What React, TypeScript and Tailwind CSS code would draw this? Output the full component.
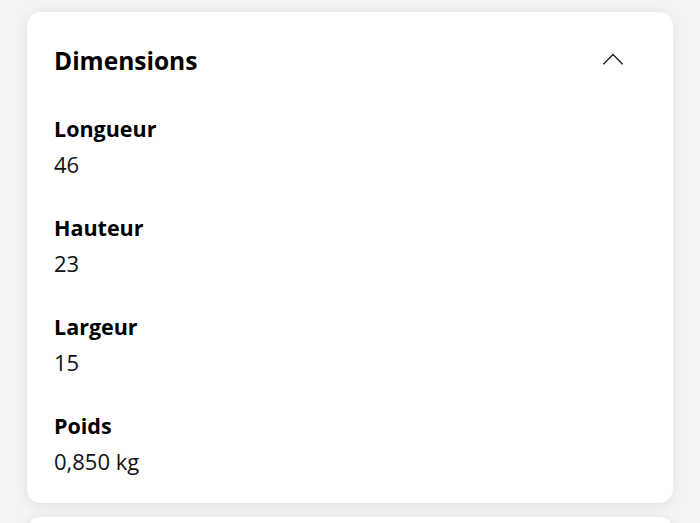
const ITEMS = [
  { label: "Longueur", value: "46" },
  { label: "Hauteur", value: "23" },
  { label: "Largeur", value: "15" },
  { label: "Poids", value: "0,850 kg" },
];

export default function App() {
  return (
    <div
      className="h-[523px] bg-[#f3f3f3] pt-[12px] px-[27px] overflow-hidden"
      style={{ fontFamily: '"Open Sans", "Noto Sans", sans-serif' }}
    >
      {/* Dimensions card */}
      <section className="bg-white rounded-[14px] shadow-[0_2px_14px_rgba(0,0,0,0.07)] pl-[27px] pr-[49px] pt-[33px] pb-[28px]">
        <div className="flex items-center justify-between h-[32px]">
          <h2 className="text-[24.5px] leading-[32px] font-bold text-black">
            Dimensions
          </h2>
          <svg className="w-[22px] h-[22px] text-[#222] mb-[2px]" viewBox="0 0 24 24" fill="none" stroke="currentColor" strokeWidth={1.6}>
            <path d="M2 16L12 6l10 10" strokeLinecap="square" />
          </svg>
        </div>

        <div className="flex flex-col gap-[36px] mt-[38px]">
          {ITEMS.map((item) => (
            <div key={item.label} className="flex flex-col gap-[7px]">
              <span className="text-[21.5px] leading-[28px] font-bold text-black">
                {item.label}
              </span>
              <span className="text-[22px] leading-[28px] text-[#111]">{item.value}</span>
            </div>
          ))}
        </div>
      </section>

      <div className="bg-white rounded-[14px] shadow-[0_2px_14px_rgba(0,0,0,0.07)] mt-[14px] h-[40px]" />
    </div>
  );
}
